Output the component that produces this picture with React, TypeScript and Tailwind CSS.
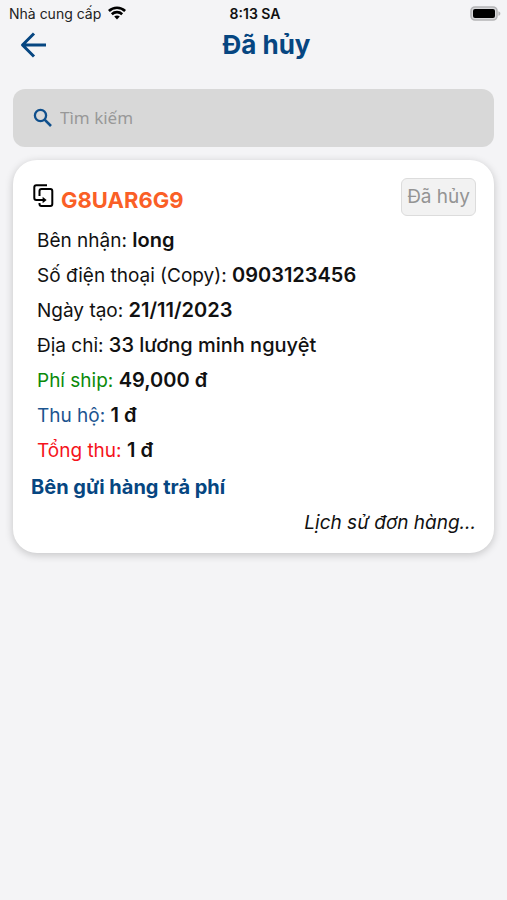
interface OrderField {
    label: string;
    value: string;
    labelClass?: string;
    valueClass?: string;
}

const fields: OrderField[] = [
    { label: 'Bên nhận:', value: 'long' },
    { label: 'Số điện thoại (Copy):', value: '0903123456' },
    { label: 'Ngày tạo:', value: '21/11/2023' },
    { label: 'Địa chỉ:', value: '33 lương minh nguyệt', valueClass: 'font-medium' },
    { label: 'Phí ship:', value: '49,000 đ', labelClass: 'text-[#0a8a0a]' },
    { label: 'Thu hộ:', value: '1 đ', labelClass: 'text-[#1c5590]' },
    { label: 'Tổng thu:', value: '1 đ', labelClass: 'text-[#f5141c]' }
];

function WifiIcon() {
    return (
        <svg viewBox="0 0 18 14" className="w-[18px] h-[14px]" fill="none" stroke="black" strokeWidth="2.6">
            <path d="M0.9 5C5.4 0.6 12.6 0.6 17.1 5" />
            <path d="M3.8 8.2C6.8 5.4 11.2 5.4 14.2 8.2" />
            <path d="M9 13.4L6.2 10.5C7.8 9.1 10.2 9.1 11.8 10.5Z" fill="black" stroke="none" />
        </svg>
    );
}

function BatteryIcon() {
    return (
        <svg viewBox="0 0 31 15" className="w-[31px] h-[15px]">
            <rect x="1" y="1" width="26" height="13" rx="4" fill="#d8d8da" stroke="#b4b4b6" strokeWidth="1.6" />
            <rect x="3" y="3" width="22" height="9" rx="2" fill="black" />
            <path d="M28.4 5.2C31 6 31 9 28.4 9.8Z" fill="#b4b4b6" />
        </svg>
    );
}

function SearchIcon() {
    return (
        <svg viewBox="0 0 24 24" className="w-6 h-6 text-[#0f4f8c]" fill="none" stroke="currentColor" strokeWidth="2.3">
            <circle cx="9.5" cy="9.5" r="5.6" />
            <path d="M13.6 13.6L20 20" strokeWidth="2.6" />
        </svg>
    );
}

function CopyIcon() {
    return (
        <svg viewBox="0 0 26 26" className="w-[26px] h-[26px]" fill="none" stroke="black" strokeWidth="2">
            <path d="M16 3.3H5.3a2 2 0 0 0-2 2V16a2 2 0 0 0 2 2H13" />
            <path d="M8.5 14V9a2 2 0 0 1 2-2H19.3a2 2 0 0 1 2 2V22a2 2 0 0 1-2 2H10.5a2 2 0 0 1-2-2V21" />
            <path d="M11.6 14.8L15.6 18L11.6 21.2Z" fill="black" stroke="none" />
        </svg>
    );
}

function StatusBar() {
    return (
        <div className="grid grid-cols-[1fr_auto_1fr] items-center h-[26px] pl-[9px] pr-[6px] text-[14px]">
            <div className="flex items-center gap-[7px] text-[#222]">
                <span>Nhà cung cấp</span>
                <WifiIcon />
            </div>
            <span className="font-semibold">8:13 SA</span>
            <div className="flex justify-end">
                <BatteryIcon />
            </div>
        </div>
    );
}

function Header() {
    return (
        <header className="flex items-center h-[38px] px-5 text-[#064681]">
            <button type="button" aria-label="Quay lại">
                <svg viewBox="0 0 26 26" className="w-[26px] h-[26px]" fill="none" stroke="currentColor" strokeWidth="3">
                    <path d="M14 1.5L2.5 13L14 24.5M2.5 13H26" strokeLinejoin="round" />
                </svg>
            </button>
            <h1 className="flex-1 text-center text-[26px] leading-8 font-bold">Đã hủy</h1>
        </header>
    );
}

function SearchBox() {
    return (
        <label className="flex items-center gap-[5px] h-[58px] px-[18px] rounded-xl bg-[#d8d8d8]">
            <SearchIcon />
            <input
                type="text"
                aria-label="Tìm kiếm"
                placeholder="Tìm kiếm"
                className="flex-1 min-w-0 bg-transparent outline-none font-['Noto_Sans',sans-serif] text-[17px] placeholder:text-[#989898]"
            />
        </label>
    );
}

function OrderCard() {
    return (
        <article className="rounded-3xl bg-white px-[18px] pt-[18px] pb-[13px] shadow-[0_2px_8px_rgba(0,0,0,0.2)]">
            <div className="flex items-start justify-between h-[45px]">
                <div className="flex items-start gap-1 pt-1">
                    <button type="button" aria-label="Sao chép mã đơn">
                        <CopyIcon />
                    </button>
                    <h2 className="text-[22px] leading-9 font-bold text-[#fa5f26]">G8UAR6G9</h2>
                </div>
                <span className="flex items-center h-[38px] px-[5px] rounded-md border border-[#dcdcdc] bg-[#f2f2f2] text-[19px] text-[#949494]">
                    Đã hủy
                </span>
            </div>
            <ul className="pl-[6px] text-[19px] leading-[35px]">
                {fields.map((field) => (
                    <li key={field.label} className="h-[35px]">
                        <span className={field.labelClass}>{field.label}</span>{' '}
                        <span className={`text-[20px] ${field.valueClass ?? 'font-semibold'}`}>{field.value}</span>
                    </li>
                ))}
            </ul>
            <p className="pt-[2px] text-[20px] leading-[35px] font-bold text-[#064681]">Bên gửi hàng trả phí</p>
            <div className="flex justify-end">
                <a href="#" className="text-[19px] leading-[35px] italic">
                    Lịch sử đơn hàng...
                </a>
            </div>
        </article>
    );
}

export default function App() {
    return (
        <div className="min-h-screen bg-[#f4f4f6] font-['Inter',sans-serif] text-[#111]">
            <StatusBar />
            <Header />
            <main className="flex flex-col gap-[13px] px-[13px] pt-[25px]">
                <SearchBox />
                <OrderCard />
            </main>
        </div>
    );
}
